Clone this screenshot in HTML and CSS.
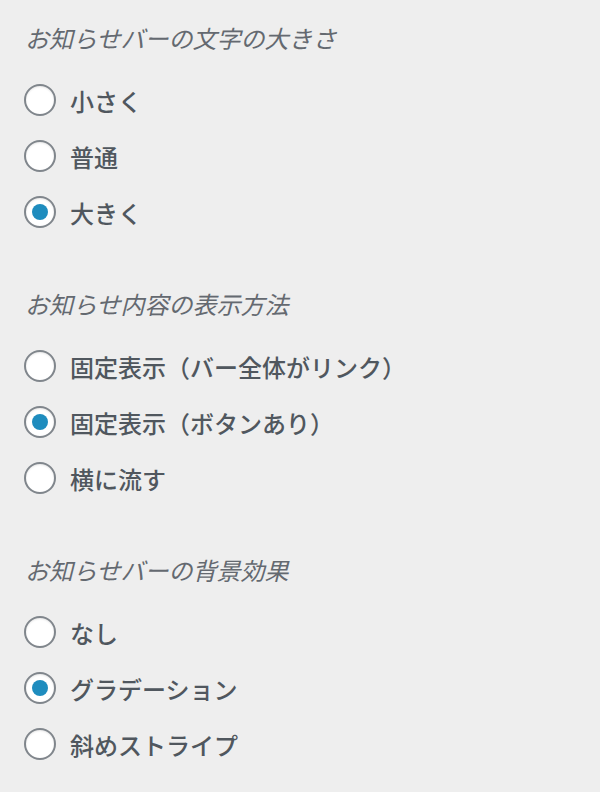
FILE: index.html
```html
<!DOCTYPE html>
<html lang="ja">
<head>
    <meta charset="UTF-8">
    <meta name="viewport" content="width=device-width, initial-scale=1.0">
    <title>お知らせバー設定</title>
    <link rel="stylesheet" href="styles.css">
</head>
<body>

    <div class="settings">
        <div class="section">
            <span class="section-title">お知らせバーの文字の大きさ</span>
            <label class="option"><input type="radio" name="size" value="small"><span>小さく</span></label>
            <label class="option"><input type="radio" name="size" value="normal"><span>普通</span></label>
            <label class="option"><input type="radio" name="size" value="large" checked><span>大きく</span></label>
        </div>

        <div class="section">
            <span class="section-title">お知らせ内容の表示方法</span>
            <label class="option"><input type="radio" name="display" value="link"><span>固定表示（バー全体がリンク）</span></label>
            <label class="option"><input type="radio" name="display" value="button" checked><span>固定表示（ボタンあり）</span></label>
            <label class="option"><input type="radio" name="display" value="marquee"><span>横に流す</span></label>
        </div>

        <div class="section">
            <span class="section-title">お知らせバーの背景効果</span>
            <label class="option"><input type="radio" name="effect" value="none"><span>なし</span></label>
            <label class="option"><input type="radio" name="effect" value="gradient" checked><span>グラデーション</span></label>
            <label class="option"><input type="radio" name="effect" value="stripe"><span>斜めストライプ</span></label>
        </div>
    </div>

</body>
</html>
```

FILE: styles.css
```css
body {
    margin: 0;
    background: #eeeeee;
    font-family: "Noto Sans CJK JP", "Noto Sans", sans-serif;
    color: #50575e;
}

.settings {
    padding: 22px 24px 0;
}

.section {
    display: flex;
    flex-direction: column;
    margin-bottom: 48px;
}

.section-title {
    display: block;
    font-size: 24px;
    line-height: 32px;
    font-style: italic;
    color: #646970;
    margin-bottom: 18px;
    padding-left: 1px;
}

.option {
    display: flex;
    align-items: center;
    height: 56px;
    font-size: 24px;
    font-weight: 500;
    cursor: pointer;
}

.option input {
    appearance: none;
    -webkit-appearance: none;
    width: 32px;
    height: 32px;
    margin: 0 14px 0 0;
    border: 2px solid #80868c;
    border-radius: 50%;
    background: #fff;
    box-shadow: inset 0 1px 2px rgba(0, 0, 0, 0.1);
    display: flex;
    align-items: center;
    justify-content: center;
    flex-shrink: 0;
    cursor: pointer;
}

.option input:checked::before {
    content: "";
    width: 16px;
    height: 16px;
    border-radius: 50%;
    background: #1e8cbe;
}
```
